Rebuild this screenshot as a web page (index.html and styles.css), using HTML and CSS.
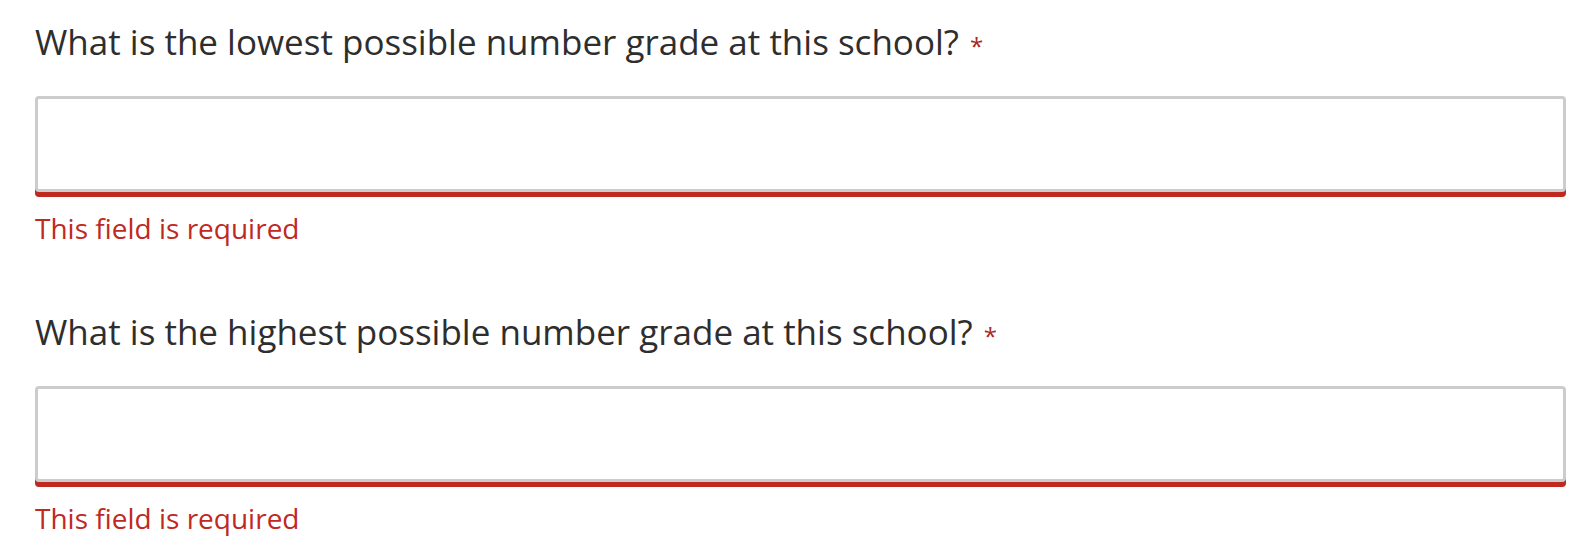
FILE: index.html
```html
<!DOCTYPE html>
<html lang="en">
<head>
<meta charset="utf-8">
<title>Grades</title>
<link rel="stylesheet" href="styles.css">
</head>
<body>
<form class="form">
  <div class="field">
    <label class="label" for="lowest">What is the lowest possible number grade at this school?<span class="req">*</span></label>
    <input class="input" id="lowest" type="text">
    <div class="error">This field is required</div>
  </div>
  <div class="field">
    <label class="label" for="highest">What is the highest possible number grade at this school?<span class="req">*</span></label>
    <input class="input" id="highest" type="text">
    <div class="error">This field is required</div>
  </div>
</form>
</body>
</html>
```

FILE: styles.css
```css
html, body {
  margin: 0;
  padding: 0;
  background: #ffffff;
}

body {
  font-family: "Open Sans", "Noto Sans", sans-serif;
}

.form {
  display: flex;
  flex-direction: column;
  gap: 64px;
  padding: 20px 17px 0 35px;
}

.field {
  display: flex;
  flex-direction: column;
}

.label {
  font-size: 35px;
  line-height: 44px;
  color: #2e2e2e;
}

.req {
  color: #a8281f;
  margin-left: 11px;
  font-size: 24px;
  line-height: 1;
}

.input {
  box-sizing: border-box;
  margin: 32px 0 0 0;
  height: 96px;
  width: 100%;
  border: 3px solid #cccccc;
  border-radius: 4px;
  box-shadow: 0 5px 0 0 #c0291f;
  background: #ffffff;
  outline: none;
  font: inherit;
  padding: 0 16px;
}

.error {
  margin-top: 18px;
  font-size: 28px;
  line-height: 36px;
  color: #c0291f;
}
```
